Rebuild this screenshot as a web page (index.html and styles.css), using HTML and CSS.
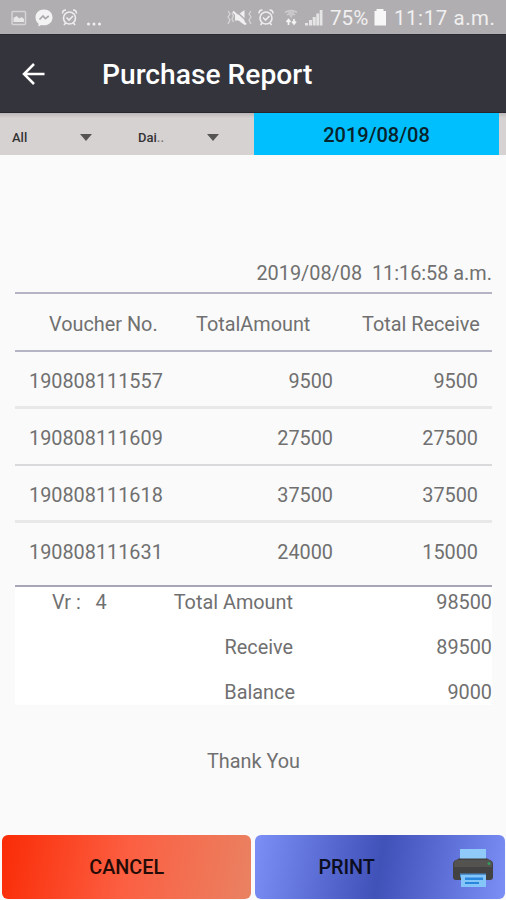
FILE: index.html
```html
<!DOCTYPE html>
<html lang="en">
<head>
<meta charset="utf-8">
<title>Purchase Report</title>
<link rel="stylesheet" href="styles.css">
</head>
<body>
<div class="screen">
  <div class="status">
    <svg class="tray" width="106" height="34" viewBox="0 0 106 34">
      <g opacity=".85">
        <rect x="12" y="11.500" width="13.500" height="13" rx="1" fill="none" stroke="#dddcdd" stroke-width="1.500"/>
        <path d="M13.500 22v-4l3-2 3 2.500 2-1.500 2.500 2V22z" fill="#f2f1f2"/>
      </g>
      <path d="M44 9.500c-5 0-8.500 3.500-8.500 8 0 2.600 1.200 4.700 3 6.100V26.500l2.800-1.500c.9.200 1.800.3 2.700.3 5 0 8.500-3.300 8.500-7.800s-3.500-8-8.500-8z" fill="#f4f3f4"/>
      <path d="M39.500 19.500l3.500-3.500 2.300 2.600 3.500-2.600" fill="none" stroke="#aaa8aa" stroke-width="1.700"/>
      <g id="alarm" fill="none" stroke="#efeeef" stroke-width="1.600">
        <circle cx="69.500" cy="18" r="6"/>
        <path d="M66.500 17.500l2.500 2.500 4-4M62.500 13.500c0-2 1.500-3.500 3.500-3.500M76.500 13.500c0-2-1.500-3.500-3.500-3.500M65.500 23l-1.500 2M73.500 23l1.500 2"/>
      </g>
      <g fill="#f1f0f1"><circle cx="88.500" cy="24" r="1.500"/><circle cx="94" cy="24" r="1.500"/><circle cx="99.500" cy="24" r="1.500"/></g>
    </svg>
    <svg class="signals" width="99" height="34" viewBox="225 0 99 34">
      <g fill="none" stroke="#d6d5d6" stroke-width="1.300">
        <path d="M228 11l2 3-2 3 2 3-2 4M232 13l1.500 3-1.500 3 1.500 3M251 11l-2 3 2 3-2 3 2 4"/>
      </g>
      <path d="M235 14.500h3.500l6-4.500v15l-6-4.500H235z" fill="#f1f0f1"/>
      <path d="M235.500 10.500l12 11.500" stroke="#b0aeb0" stroke-width="1.500"/>
      <path d="M233 11.500l13 13" stroke="#f2f1f2" stroke-width="2"/>
      <use href="#alarm" x="196.500"/>
      <g fill="none" stroke="#d3d1d3" stroke-width="1.300">
        <path d="M285 12.500q6-4 12 0M287 15q4-3 8 0"/>
      </g>
      <path d="M286.500 10.500h9l-4.500 8z" fill="#c8c6c8"/>
      <path d="M288.500 25v-5M286.500 22l2-2.500 2 2.500M294 19v5M292 21.500l2 2.500 2-2.500" fill="none" stroke="#f4f3f4" stroke-width="1.700"/>
      <path d="M305 25.500v-2.500h3v2.500zM309 25.500V20h3v5.500zM312.700 25.500V17h3v8.500zM316.300 25.500V13.500h2.800v12zM319.700 25.500V10h2.800v15.500z" fill="#e6e5e6"/>
    </svg>
    <span class="percent">75%</span>
    <svg class="battery" width="12" height="34" viewBox="0 0 12 34"><path d="M2.500 9h7v2H12v14.500H.500V11h2z" fill="#f7f7f7"/></svg>
    <span class="clock">11:17 a.m.</span>
  </div>
  <header class="appbar">
    <svg width="24" height="24" viewBox="0 0 24 24"><path d="M23.500 12H3M13 2L3 12l10 10" fill="none" stroke="#fff" stroke-width="2.500"/></svg>
    <h1>Purchase Report</h1>
  </header>
  <div class="filters">
    <div class="select all"><span>All</span><i class="caret"></i></div>
    <div class="select period"><span>Dai<em>..</em></span><i class="caret"></i></div>
    <div class="date">2019/08/08</div>
  </div>
  <main class="report">
    <div class="stamp">2019/08/08&nbsp; 11:16:58 a.m.</div>
    <div class="head"><span class="vno">Voucher No.</span><span class="amount">TotalAmount</span><span>Total Receive</span></div>
    <div class="row"><span>190808111557</span><span>9500</span><span>9500</span></div>
    <div class="row thin"><span>190808111609</span><span>27500</span><span>27500</span></div>
    <div class="row"><span>190808111618</span><span>37500</span><span>37500</span></div>
    <div class="row last"><span>190808111631</span><span>24000</span><span>15000</span></div>
    <div class="totals">
      <div class="total"><span class="count">Vr :&nbsp;&nbsp; 4</span><span class="label">Total Amount</span><span>98500</span></div>
      <div class="total"><span></span><span class="label">Receive</span><span>89500</span></div>
      <div class="total"><span></span><span class="label bal">Balance</span><span>9000</span></div>
    </div>
    <p class="thanks">Thank You</p>
  </main>
  <footer class="actions">
    <div class="button cancel">CANCEL</div>
    <div class="button print"><span>PRINT</span>
      <svg width="40" height="38" viewBox="0 0 40 38">
        <path d="M0 15q0-3 3-4l4-2h26l4 2q3 1 3 4v13q0 3-3 3H3q-3 0-3-3z" fill="#424242"/>
        <path d="M1 14q1-3 3-3h32q2 0 3 3v4H1z" fill="#555350"/>
        <path d="M7 0h26v9.500H7z" fill="#90caf9"/>
        <circle cx="36" cy="14.500" r="1.500" fill="#2f9c5c"/>
        <path d="M7 24.500h26v4H7z" fill="#4a8fd0"/>
        <path d="M8 26h25v12H8z" fill="#84c5fa"/>
        <path d="M12 28.500h18v2.500H12zM12 33h14v2H12z" fill="#2987dd"/>
      </svg>
    </div>
  </footer>
</div>
</body>
</html>
```
FILE: styles.css
```css
* { box-sizing: border-box; }
body { margin: 0; background: #fafafa; font-family: Roboto, "Liberation Sans", sans-serif; }
.screen { width: 506px; height: 900px; display: flex; flex-direction: column; overflow: hidden; color: #707070; font-size: 19.85px; }
svg { display: block; flex: none; }
.status { height: 34px; background: #b0aeb0; display: flex; align-items: center; color: #f1f0f1; flex: none; }
.signals { margin-left: 119px; }
.percent { margin-left: 6px; width: 44px; font-size: 20.6px; padding-top: 2px; white-space: nowrap; }
.clock { margin-left: 8px; padding-top: 2px; font-size: 20.4px; letter-spacing: .6px; white-space: nowrap; }
.appbar { height: 79px; background: #34343d; border-top: 1px solid #2b2b30; border-bottom: 1px solid #26262c; display: flex; align-items: center; padding-left: 21px; flex: none; }
h1 { margin: 0 0 0 57px; padding-top: 2px; font-size: 28.2px; font-weight: 500; color: #fff; line-height: 40px; }
.filters { height: 42px; display: flex; background: linear-gradient(#bbb7b8, #d7d2d2 5px); flex: none; color: #343333; font-size: 13px; font-weight: 500; }
.select { width: 126px; height: 42px; display: flex; align-items: center; justify-content: space-between; padding: 6px 34px 0 12px; }
.period { width: 127px; }
.period em { font-style: normal; color: #777; }
.caret { border: 6px solid transparent; border-top: 7px solid #565353; border-bottom: 0; }
.date { width: 245px; margin-left: 1px; background: #00bfff; display: flex; align-items: center; justify-content: center; font-size: 20px; color: #08232c; padding-top: 2px; }
.report { flex: none; height: 680px; padding: 106px 14px 0 15px; line-height: 24px; }
.stamp { height: 31px; padding-top: 1px; text-align: right; white-space: pre; }
.row { height: 57px; display: grid; grid-template-columns: 156px 148px 145px; align-items: center; border-bottom: 3px solid #e8e8e8; padding: 6px 0 0 14px; }
.row span:not(:first-child) { text-align: right; }
.head { height: 60px; border-top: 2px solid #b4b4c4; border-bottom: 2px solid #b4b4c4; padding-top: 5px; display: flex; align-items: center; }
.vno { margin-left: 34px; width: 147px; }
.amount { width: 166px; }
.row.thin { border-bottom: 2px solid #d9d9db; padding-top: 4px; }
.row.last { height: 64px; border-bottom: 2px solid #a8a6b6; padding: 0 0 2px 14px; }
.totals { background: #fff; height: 118px; padding-top: 4px; }
.total { display: grid; grid-template-columns: 100px 178px 1fr; height: 45px; }
.total:last-child { height: 24px; }
.total span:last-child, .label { text-align: right; }
.count { padding-left: 37px; white-space: nowrap; }
.bal { margin-right: -2px; }
.thanks { margin: 45px 0 0; text-align: center; }
.actions { display: flex; gap: 4px; padding: 0 1px 0 2px; height: 65px; flex: none; color: #0b0d20; font-size: 19.8px; font-weight: 500; }
.button { width: 250px; height: 64px; border-radius: 6px; display: flex; align-items: center; padding-top: 1px; }
.cancel { justify-content: center; color: #240b05; background: linear-gradient(100deg, #fa2b06 0%, #fc5f42 50%, #e98262 100%); }
.print { background: linear-gradient(100deg, #7b8ff7 0%, #4051b8 50%, #7b8ff7 100%); padding-left: 63px; }
.print svg { margin-left: 78px; }
```
